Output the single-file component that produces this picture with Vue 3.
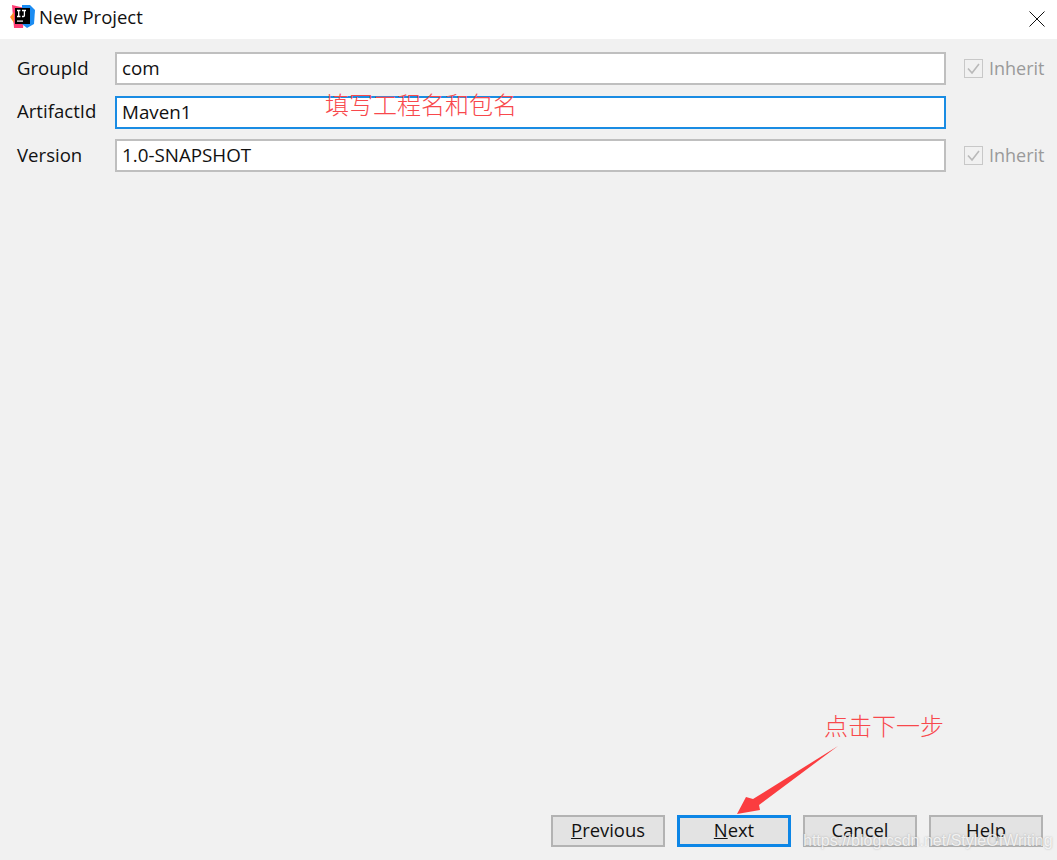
<script setup>
const rows = [
  { label: 'GroupId', value: 'com', inherit: true },
  { label: 'ArtifactId', value: 'Maven1', inherit: false, focused: true },
  { label: 'Version', value: '1.0-SNAPSHOT', inherit: true },
]
const buttons = [
  { key: 'P', rest: 'revious' },
  { key: 'N', rest: 'ext', primary: true },
  { key: '', rest: 'Cancel' },
  { key: '', rest: 'Help' },
]
</script>

<template>
  <div class="dialog">
    <header class="titlebar">
      <svg class="logo" width="26" height="26" viewBox="0 0 26 26">
        <path d="M3 1 L16 4 L14 24 L5 24 Z" fill="#fe3d74" />
        <path d="M1 13 L5 8 L5 19 Z" fill="#fd8d2b" />
        <path d="M13 1 L21 1 L26 6 L25 20 L18 24 L13 20 Z" fill="#1b8cf2" />
        <rect x="6" y="4" width="15" height="16" fill="#000" />
        <rect x="8" y="16.5" width="6" height="1.2" fill="#fff" />
        <path d="M8 6.5H11.4M9.7 6.5V12.5M8 12.5H11.4M13 6.5H17M15.4 6.5V11.5Q15.4 12.5 14.4 12.5H13" stroke="#fff" stroke-width="1.3" fill="none" />
      </svg>
      <span class="title">New Project</span>
      <svg class="close" width="16" height="16" viewBox="0 0 16 16">
        <path d="M0.5 0.5L15.5 15.5M15.5 0.5L0.5 15.5" stroke="#111" stroke-width="1" />
      </svg>
    </header>

    <main class="body">
      <div class="form">
        <div v-for="r in rows" :key="r.label" class="row">
          <label class="label">{{ r.label }}</label>
          <div class="input" :class="{ focused: r.focused }">{{ r.value }}</div>
          <div class="inherit">
            <template v-if="r.inherit">
              <span class="check">
                <svg width="17" height="17" viewBox="0 0 17 17">
                  <path d="M3 8.5L7 13L14 4" stroke="#b9b9b9" stroke-width="1.6" fill="none" />
                </svg>
              </span>
              <span class="inherit-text">Inherit</span>
            </template>
          </div>
        </div>
      </div>

      <footer class="footer">
        <button v-for="b in buttons" :key="b.rest" class="btn" :class="{ primary: b.primary }">
          <u v-if="b.key">{{ b.key }}</u>{{ b.rest }}
        </button>
      </footer>
    </main>

    <span class="note note-fields">填写工程名和包名</span>
    <span class="note note-next">点击下一步</span>
    <svg class="arrow" width="110" height="76" viewBox="0 0 110 76">
      <path d="M104 1 L19 54 L12 52 L3 69 L26 65 L25 60 Z" fill="#fb3c3f" />
    </svg>
    <span class="watermark">https://blog.csdn.net/StyleOfWriting</span>
  </div>
</template>

<style>
html, body { margin: 0; background: #f1f1f1; }
</style>

<style scoped>
.dialog {
  position: relative;
  width: 1057px;
  height: 860px;
  display: flex;
  flex-direction: column;
  overflow: hidden;
  font-family: "Open Sans", "Noto Sans", "Liberation Sans", sans-serif;
  color: #111;
  background: #f1f1f1;
}
.titlebar {
  height: 39px;
  flex: none;
  display: flex;
  align-items: center;
  background: #fff;
  padding: 0 12px 6px 9px;
  box-sizing: border-box;
}
.logo { flex: none; }
.title { margin-left: 4px; margin-bottom: 1px; font-size: 18.5px; }
.close { margin-left: auto; margin-top: 5px; }
.body {
  flex: 1;
  display: flex;
  flex-direction: column;
  justify-content: space-between;
  padding: 13px 14px 13px 17px;
}
.form { display: flex; flex-direction: column; gap: 10.5px; }
.row { display: flex; align-items: center; height: 33px; }
.label { width: 98px; font-size: 18.6px; flex: none; padding-bottom: 3px; }
.input {
  flex: none;
  width: 831px;
  height: 33px;
  box-sizing: border-box;
  border: 2px solid #bfbfbf;
  background: #fff;
  padding-left: 5px;
  font-size: 18.8px;
  line-height: 28px;
}
.input.focused { border-color: #1a8ce3; }
.inherit { display: flex; align-items: center; margin-left: 18px; flex: none; }
.check {
  width: 19px;
  height: 19px;
  box-sizing: border-box;
  border: 1px solid #c8c8c8;
  background: #f1f1f1;
  display: flex;
  align-items: center;
  justify-content: center;
}
.inherit-text { margin-left: 6px; margin-bottom: 2px; font-size: 18px; color: #9a9a9a; }
.footer { display: flex; justify-content: flex-end; gap: 12px; }
.btn {
  width: 114px;
  height: 32px;
  box-sizing: border-box;
  border: 2px solid #b3b3b3;
  background: #e3e3e3;
  font: inherit;
  font-size: 18.4px;
  line-height: 24px;
  color: #111;
  padding: 0 0 2px;
}
.btn.primary { border: 3px solid #0d86e6; }
.note {
  position: absolute;
  font-family: "Noto Sans CJK SC", sans-serif;
  font-weight: 300;
  color: #f8484c;
  font-size: 24px;
  line-height: 30px;
  white-space: nowrap;
}
.note-fields { left: 325px; top: 89px; }
.note-next { left: 824px; top: 710px; }
.arrow { position: absolute; left: 734px; top: 745px; }
.watermark {
  position: absolute;
  left: 803px;
  top: 832px;
  font-family: "Liberation Sans", sans-serif;
  font-size: 16px;
  color: rgba(255, 255, 255, 0.8);
  text-shadow: 0 0 2px rgba(120, 120, 120, 0.55);
  white-space: nowrap;
}
</style>
